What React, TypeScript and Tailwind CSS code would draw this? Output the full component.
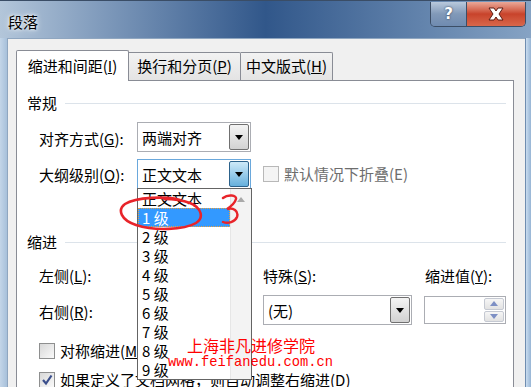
import React from "react";

const Arrow = ({ up = false, color = "#000" }: { up?: boolean; color?: string }) => (
  <svg width="8" height="5" viewBox="0 0 8 5">
    <path d={up ? "M0 5 L4 0 L8 5 Z" : "M0 0 L8 0 L4 5 Z"} fill={color} />
  </svg>
);

const Combo = ({ text, w, focus = false }: { text: string; w: string; focus?: boolean }) => (
  <div
    className={`flex h-[30px] ${w} border bg-white p-[1px] ${
      focus ? "border-[#6aa8dc]" : "border-[#abadb3]"
    }`}
  >
    <span className="flex-1 pl-[3px] leading-[27px]">{text}</span>
    <span
      className={`flex w-[20px] items-center justify-center rounded-[2px] border ${
        focus
          ? "border-[#2c628b] bg-linear-to-b from-[#cde9f8] to-[#66b0dc]"
          : "border-[#707070] bg-linear-to-b from-[#f4f4f4] to-[#d2d2d2]"
      }`}
    >
      <Arrow />
    </span>
  </div>
);

const Check = ({ checked = false, disabled = false }: { checked?: boolean; disabled?: boolean }) => (
  <span
    className={`flex h-[16px] w-[16px] items-center justify-center border ${
      disabled
        ? "border-[#b8b8b8] bg-[#f4f4f4]"
        : "border-[#8e8f8f] bg-linear-to-br from-[#d8d8d8] to-[#fafafa]"
    }`}
  >
    {checked && (
      <svg width="12" height="12" viewBox="0 0 12 12">
        <path d="M2 6 L5 9.5 L10.5 1.5" fill="none" stroke="#3b4f8c" strokeWidth="2.2" />
      </svg>
    )}
  </span>
);

const Spinner = ({ w }: { w: string }) => (
  <div className={`flex h-[28px] ${w} border border-[#abadb3] bg-white p-[1px]`}>
    <span className="flex-1" />
    <span className="flex w-[20px] flex-col gap-[1px]">
      <span className="flex flex-1 items-center justify-center rounded-[2px] border border-[#c5c9d2] bg-linear-to-b from-[#f6f6f6] to-[#e2e2e2]">
        <Arrow up color="#7d8fc4" />
      </span>
      <span className="flex flex-1 items-center justify-center rounded-[2px] border border-[#c5c9d2] bg-linear-to-b from-[#f6f6f6] to-[#e2e2e2]">
        <Arrow color="#7d8fc4" />
      </span>
    </span>
  </div>
);

const Header = ({ title, mt }: { title: string; mt: string }) => (
  <div className={`${mt} flex h-[20px] items-center`}>
    <span className="pl-[10px] leading-[20px]">{title}</span>
    <span className="ml-[8px] mr-[7px] h-px flex-1 bg-[#dce3ea]" />
  </div>
);

const levels = ["正文文本", "1 级", "2 级", "3 级", "4 级", "5 级", "6 级", "7 级", "8 级", "9 级"];

export default function App() {
  return (
    <div className="relative h-[387px] w-[531px] overflow-hidden bg-linear-to-r from-[#b3c6da] via-[#31578a] via-50% to-[#86a3c4] font-['Noto_Sans_CJK_SC',sans-serif] text-[15px] text-black">
      {/* title bar */}
      <div className="flex h-[38px] items-start border-t border-[#3a4d66]">
        <span className="ml-[8px] mt-[11px] leading-[20px] [text-shadow:0_0_6px_#fff,0_0_3px_#fff]">段落</span>
        <div className="ml-auto mr-[5px] mt-[1px] flex h-[25px] overflow-hidden rounded-b-[5px] border border-t-0 border-[#3c4e66]">
          <span className="flex w-[36px] items-center justify-center border-r border-[#3c4e66] bg-linear-to-b from-[#b9c9dc] via-[#8199b8] to-[#6f8bb0] font-['DejaVu_Sans',sans-serif] text-[15px] font-bold text-white [text-shadow:0_0_2px_#1b2b44]">
            ?
          </span>
          <span className="flex w-[58px] items-center justify-center bg-linear-to-b from-[#e9a898] via-[#c8432b] to-[#d8674b]">
            <svg width="18" height="14" viewBox="0 0 18 14">
              <path
                d="M2 1 L7 1 L9 4 L11 1 L16 1 L12 7 L16 13 L11 13 L9 10 L7 13 L2 13 L6 7 Z"
                fill="#fff"
                stroke="#5a1c12"
                strokeWidth="1"
              />
            </svg>
          </span>
        </div>
      </div>

      {/* frame + body */}
      <div className="flex h-[349px]">
        <div className="w-[7px] bg-linear-to-r from-[#c3d5e8] to-[#a7c0da]" />
        <div className="flex-1 border-l border-t border-[#8fa6c0] bg-[#f0f0f0] pl-[8px] pr-[11px] pt-[11px]">
          {/* tabs */}
          <div className="flex h-[30px] items-start">
            <div className="relative z-10 flex h-[31px] w-[113px] justify-center rounded-t-[2px] border border-b-0 border-[#898c95] bg-white pt-[5px] leading-[20px]">
              缩进和间距(<u>I</u>)
            </div>
            <div className="mt-[2px] flex h-[28px] w-[112px] justify-center rounded-tr-[2px] border border-b-0 border-l-0 border-[#898c95] bg-linear-to-b from-[#f2f2f2] to-[#e4e4e4] pt-[3px] leading-[20px]">
              换行和分页(<u>P</u>)
            </div>
            <div className="mt-[2px] flex h-[28px] w-[92px] justify-center rounded-tr-[2px] border border-b-0 border-l-0 border-[#898c95] bg-linear-to-b from-[#f2f2f2] to-[#e4e4e4] pt-[3px] leading-[20px]">
              中文版式(<u>H</u>)
            </div>
          </div>

          {/* panel */}
          <div className="h-[320px] w-[498px] border border-[#898c95] bg-white">
            <Header title="常规" mt="mt-[12px]" />
            <div className="mt-[9px] flex h-[30px] items-center pl-[22px]">
              <span className="w-[98px] pt-[3px] leading-[20px]">
                对齐方式(<u>G</u>):
              </span>
              <Combo text="两端对齐" w="w-[114px]" />
            </div>
            <div className="mt-[7px] flex h-[30px] items-center pl-[22px]">
              <span className="w-[98px] pt-[2px] leading-[20px]">
                大纲级别(<u>O</u>):
              </span>
              <Combo text="正文文本" w="w-[114px]" focus />
              <span className="ml-[12px]">
                <Check disabled />
              </span>
              <span className="ml-[5px] leading-[20px] text-[#6d6d6d]">默认情况下折叠(E)</span>
            </div>

            <Header title="缩进" mt="mt-[43px]" />
            <div className="mt-[14px] flex h-[20px] items-center pl-[22px] leading-[20px]">
              <span className="w-[98px]">
                左侧(<u>L</u>):
              </span>
              <span className="w-[126px]" />
              <span className="w-[162px]">
                特殊(<u>S</u>):
              </span>
              <span>
                缩进值(<u>Y</u>):
              </span>
            </div>
            <div className="mt-[9px] flex h-[30px] items-center pl-[22px]">
              <span className="w-[98px] pt-[3px] leading-[20px]">
                右侧(<u>R</u>):
              </span>
              <span className="w-[126px]">
                <Spinner w="w-[100px]" />
              </span>
              <Combo text="(无)" w="w-[149px]" />
              <span className="ml-[12px]">
                <Spinner w="w-[82px]" />
              </span>
            </div>
            <div className="mt-[16px] flex h-[20px] items-center pl-[22px] leading-[20px]">
              <Check />
              <span className="ml-[5px]">
                对称缩进(<u>M</u>)
              </span>
            </div>
            <div className="mt-[9px] flex h-[20px] items-center pl-[22px] leading-[20px]">
              <Check checked />
              <span className="ml-[5px]">
                如果定义了文档网格，则自动调整右缩进(<u>D</u>)
              </span>
            </div>
          </div>
        </div>
        <div className="w-[6px] border-l border-[#6f8db0] bg-linear-to-r from-[#c9dcef] to-[#97b5d5]" />
      </div>

      {/* dropdown list */}
      <div className="absolute left-[137px] top-[188px] z-20 flex h-[192px] w-[115px] border border-[#646464] bg-white">
        <div className="w-[92px]">
          {levels.map((l, i) => (
            <div
              key={l}
              className={`h-[19px] pl-[4px] leading-[19px] ${
                i === 1 ? "bg-[#3399ff] text-white outline-1 -outline-offset-1 outline-dotted outline-[#e8a040]" : ""
              }`}
            >
              {l}
            </div>
          ))}
        </div>
        <div className="flex flex-1 justify-center border-l border-[#e6e6e6] bg-[#f3f3f3] pt-[8px]">
          <Arrow up color="#a9a9a9" />
        </div>
      </div>

      {/* red annotation */}
      <svg className="absolute left-[118px] top-[194px] z-30" width="124" height="40" viewBox="0 0 124 40">
        <path
          d="M62 6 C48 2 18 3 7 10 C-1 16 3 26 18 31 C36 37 66 36 78 29 C86 24 84 14 72 9 C64 6 56 5 46 5"
          fill="none"
          stroke="#e8242a"
          strokeWidth="2.6"
          strokeLinecap="round"
        />
        <path
          d="M105 4 C110 0 119 1 118 5 C117 9 112 13 109 15 C115 13 121 17 119 23 C117 28 110 30 105 28"
          fill="none"
          stroke="#e8242a"
          strokeWidth="2.4"
          strokeLinecap="round"
        />
      </svg>

      {/* watermark */}
      <div className="absolute left-[187px] top-[335px] z-30 text-[16px] leading-[20px] text-[#ff0000]">上海非凡进修学院</div>
      <div className="absolute left-[168px] top-[354px] z-30 font-['Liberation_Mono',monospace] text-[13.75px] leading-[18px] text-[#ff0000]">
        www.feifanedu.com.cn
      </div>
    </div>
  );
}
